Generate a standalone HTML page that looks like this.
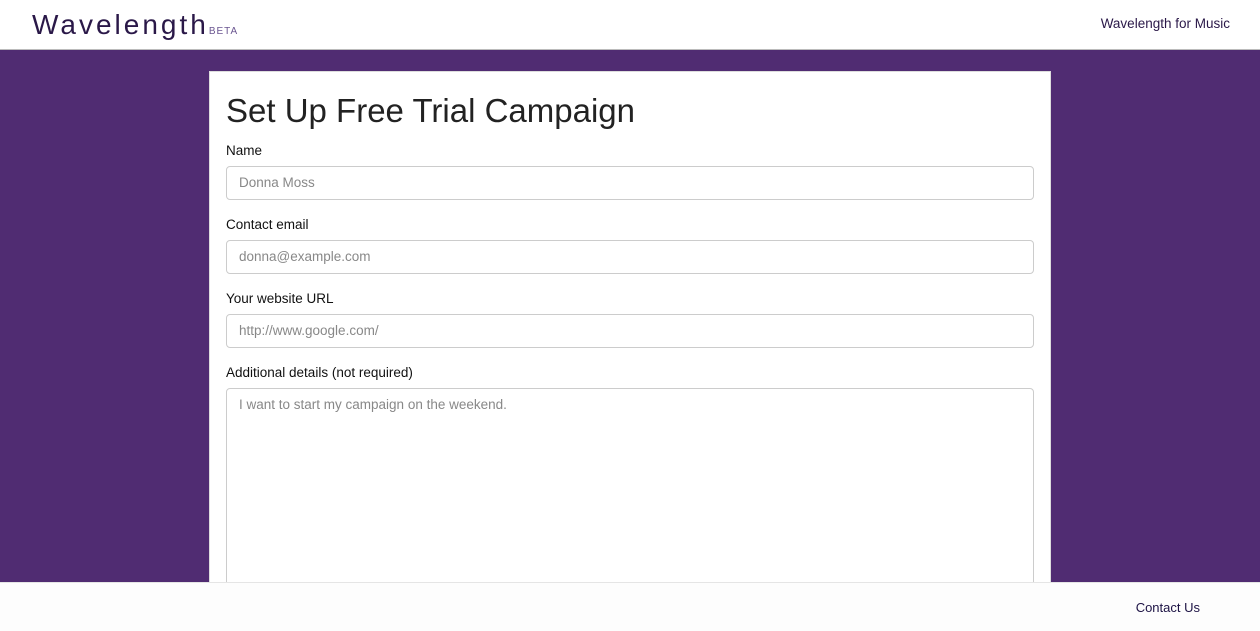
<!DOCTYPE html>
<html><head><style>
*{box-sizing:border-box;margin:0;padding:0}
body{width:1260px;height:631px;overflow:hidden;background:#502c72;font-family:"Liberation Sans",sans-serif;position:relative}
.hdr{position:absolute;top:0;left:0;width:1260px;height:50px;background:#fff;border-bottom:1px solid #bbb}
.logo{position:absolute;left:32px;top:9px;font-size:28px;letter-spacing:3px;color:#2a1848;font-weight:300}
.beta{font-size:10px;color:#6a5590;letter-spacing:1px;margin-left:0}
.nav{position:absolute;right:30px;top:16px;font-size:13.5px;color:#2a1848}
.card{position:absolute;left:209px;top:71px;width:842px;height:520px;background:#fff;border:1px solid #ddd;padding:0 16px}
h1{font-weight:400;font-size:33px;color:#222;margin-top:20px;margin-bottom:13px}
label{display:block;font-size:13.5px;color:#111;margin-bottom:7px;height:16px}
.in{height:34px;border:1px solid #ccc;border-radius:4px;padding:8px 12px;font-size:13.5px;color:#888;margin-bottom:17px}
.ta{height:200px}
.ftr{position:absolute;left:0;top:582px;width:1260px;height:49px;background:#fdfdfd;border-top:1px solid #e5e5e5}
.ftr span{position:absolute;right:60px;top:17px;font-size:13px;color:#1c1244}
</style></head><body>
<div class="hdr"><div class="logo">Wavelength<span class="beta">BETA</span></div><div class="nav">Wavelength for Music</div></div>
<div class="card">
<h1>Set Up Free Trial Campaign</h1>
<label>Name</label><div class="in">Donna Moss</div>
<label>Contact email</label><div class="in">donna@example.com</div>
<label>Your website URL</label><div class="in">http://www.google.com/</div>
<label>Additional details (not required)</label><div class="in ta">I want to start my campaign on the weekend.</div>
</div>
<div class="ftr"><span>Contact Us</span></div>
</body></html>
